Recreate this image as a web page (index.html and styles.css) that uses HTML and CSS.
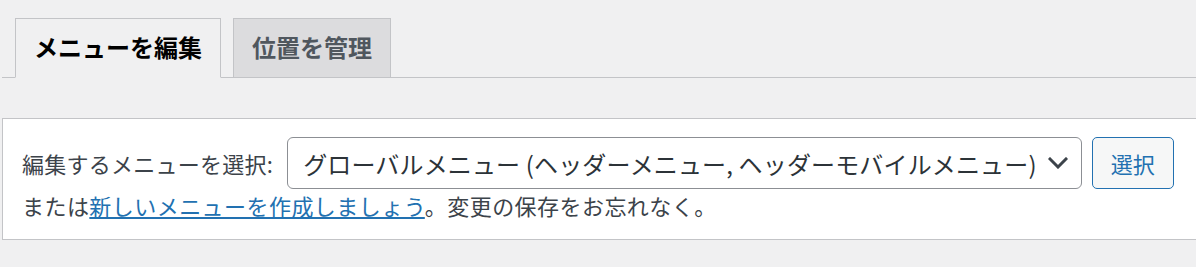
FILE: index.html
```html
<!DOCTYPE html>
<html lang="ja">
<head>
<meta charset="utf-8">
<title>メニュー</title>
<link rel="stylesheet" href="styles.css">
</head>
<body>
<div class="wrap">
  <nav class="nav-tab-wrapper">
    <a class="nav-tab nav-tab-active" href="#">メニューを編集</a>
    <a class="nav-tab" href="#">位置を管理</a>
  </nav>
  <div class="manage-menus">
    <div class="select-row">
      <label class="select-label">編集するメニューを選択:</label>
      <div class="fake-select">
        <span class="fake-select-text">グローバルメニュー (ヘッダーメニュー, ヘッダーモバイルメニュー)</span>
        <svg class="chevron" width="20" height="12" viewBox="0 0 20 12" aria-hidden="true"><polyline points="2,2 10,10 18,2" fill="none" stroke="#3c434a" stroke-width="3" stroke-linecap="square"/></svg>
      </div>
      <button class="button" type="button">選択</button>
    </div>
    <p class="add-new">または<a href="#">新しいメニューを作成しましょう</a>。変更の保存をお忘れなく。</p>
  </div>
</div>
</body>
</html>
```

FILE: styles.css
```css
html, body {
  margin: 0;
  padding: 0;
  background: #f0f0f1;
  overflow: hidden;
}
body {
  font-family: "Noto Sans CJK JP", "Noto Sans", sans-serif;
  color: #3c434a;
  font-size: 22px;
}
.wrap {
  padding-left: 2px;
  margin-right: -20px;
}
.nav-tab-wrapper {
  display: flex;
  align-items: flex-end;
  padding-top: 18px;
  padding-left: 13px;
  border-bottom: 1px solid #c3c4c7;
}
.nav-tab {
  display: block;
  box-sizing: border-box;
  height: 60px;
  padding: 8px 18px 10px;
  margin-bottom: -1px;
  border: 1px solid #c3c4c7;
  background: #dcdcde;
  color: #50575e;
  font-size: 24px;
  line-height: 40px;
  font-weight: 700;
  text-decoration: none;
  white-space: nowrap;
}
.nav-tab + .nav-tab {
  margin-left: 12px;
}
.nav-tab-active {
  background: #f0f0f1;
  color: #000;
  border-bottom-color: #f0f0f1;
}
.manage-menus {
  margin-top: 40px;
  background: #fff;
  border: 1px solid #c3c4c7;
  padding: 18px 19px 18px;
}
.select-row {
  display: flex;
  align-items: center;
}
.select-label {
  line-height: 31px;
  letter-spacing: 0.25px;
  white-space: nowrap;
}
.fake-select {
  display: flex;
  align-items: center;
  box-sizing: border-box;
  height: 52px;
  margin-left: 14px;
  padding: 0 13px 0 15px;
  border: 1px solid #8c8f94;
  border-radius: 6px;
  background: #fff;
  color: #2c3338;
  font-size: 24px;
  letter-spacing: 0.15px;
  white-space: nowrap;
}
.chevron {
  margin-left: 11px;
  flex: none;
}
.button {
  box-sizing: border-box;
  height: 52px;
  margin-left: 10px;
  padding: 0 18px;
  border: 1px solid #2271b1;
  border-radius: 5px;
  background: #f6f7f7;
  color: #2271b1;
  font-family: inherit;
  font-size: 22px;
  line-height: 1;
}
.add-new {
  margin: 1px 0 0;
  line-height: 31px;
  letter-spacing: 0.45px;
  white-space: nowrap;
}
.add-new a {
  color: #2271b1;
  text-decoration: underline;
}
```
